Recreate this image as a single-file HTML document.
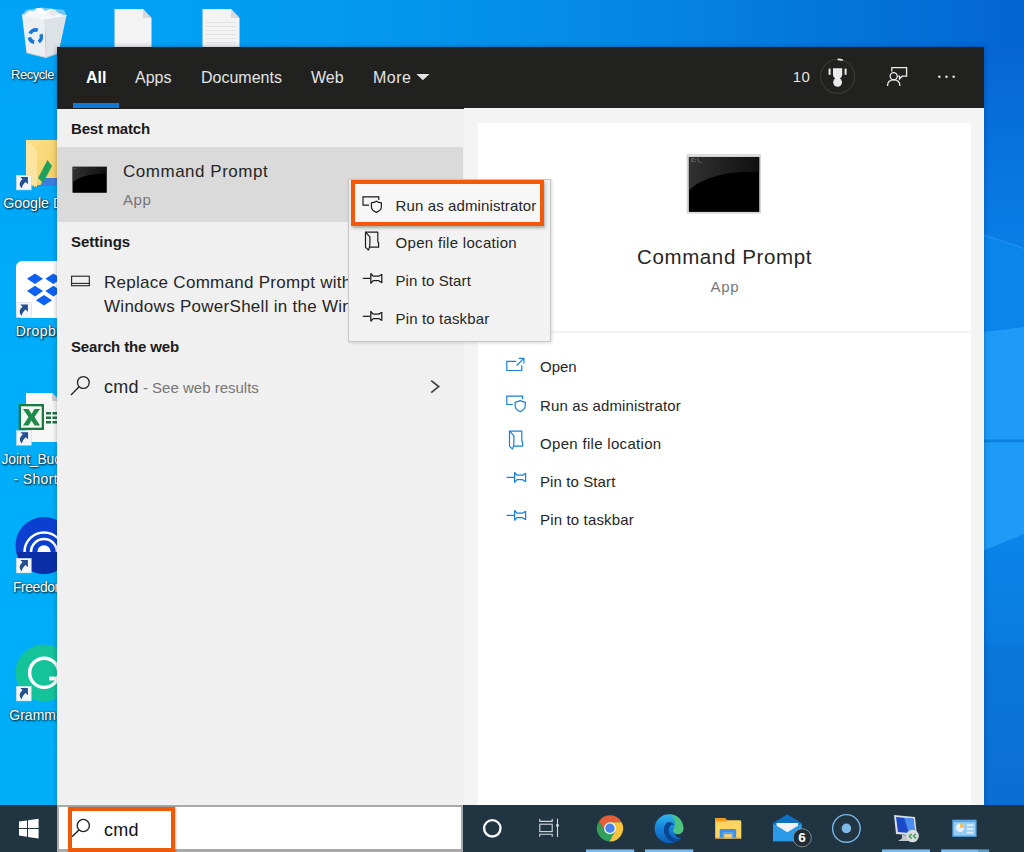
<!DOCTYPE html>
<html lang="en">
<head>
<meta charset="utf-8">
<title>Windows Search - cmd</title>
<style>
*{box-sizing:border-box;margin:0;padding:0}
html,body{width:1024px;height:852px;overflow:hidden;background:#00a2f3}
body{position:relative;font-family:"Liberation Sans",sans-serif;color:#262626}
.abs{position:absolute}
.t{position:absolute;white-space:nowrap;line-height:1}
.b{font-weight:bold;color:#1a1a1a}
.g{color:#767676}
.dl{color:#fff;font-size:14px;text-shadow:1px 1px 2px rgba(0,0,0,.85),0 0 2px rgba(0,0,0,.6)}
#desk{position:absolute;left:0;top:0;width:1024px;height:852px;overflow:hidden;
  background:linear-gradient(90deg,#00a2f5 0px,#00a1f4 150px,#0399ee 350px,#0489e6 600px,#0474da 850px,#0365d2 1024px)}
#panel{position:absolute;left:57px;top:47.300px;width:927.400px;height:758px;box-shadow:0 0 5px rgba(0,20,60,.35);background:#f0f0f0;overflow:hidden}
#rp{position:absolute;left:407px;top:61px;width:520px;height:697px;background:#f4f4f4}
#hdr{position:absolute;left:0;top:0;width:928px;height:61.400px;background:#212120}
#hdr .t{color:#e4e4e4;font-size:16px}
#card{position:absolute;left:420.500px;top:76px;width:493.500px;height:690px;background:#fff}
#sel{position:absolute;left:0;top:100px;width:406px;height:75px;background:#dadada}
#ctx{position:absolute;left:348px;top:179.300px;width:202.900px;height:162.500px;background:#f2f2f2;border:1px solid #c6c6c6;box-shadow:1px 1px 3px rgba(0,0,0,.15)}
#ctxhl{position:absolute;left:351.200px;top:180px;width:193.300px;height:46px;border:4.500px solid #f25a0a;background:#f7f7f7;box-shadow:1px 2px 3px rgba(0,0,0,.3)}
#tb{position:absolute;left:0;top:804.500px;width:1024px;height:48px;background:#203441}
#sbox{position:absolute;left:57px;top:805px;width:406px;height:47px;background:#fff;border:2px solid #a9a9a9;border-bottom-width:3px}
#shl{position:absolute;left:68px;top:807px;width:107px;height:45px;border:4px solid #ee5a0c;box-shadow:1px 0 2px rgba(0,0,0,.25)}
</style>
</head>
<body>
<div id="desk"></div>
<div class="abs" style="left:0;top:0;width:62px;height:806px;background:linear-gradient(180deg,#00a2f5 0px,#00a6f7 110px,#00adf8 360px,#00aef8 806px)"></div>
<svg class="abs" style="left:980px;top:47px" width="44" height="805" viewBox="980 47 44 805">
  <defs>
    <linearGradient id="w1" x1="0" y1="47" x2="0" y2="250" gradientUnits="userSpaceOnUse"><stop offset="0" stop-color="#0566d3"/><stop offset="1" stop-color="#0a7ee8"/></linearGradient>
    <linearGradient id="w5" x1="0" y1="535" x2="0" y2="852" gradientUnits="userSpaceOnUse"><stop offset="0" stop-color="#0a85ea"/><stop offset=".33" stop-color="#0a7ce0"/><stop offset=".36" stop-color="#0a76da"/><stop offset="1" stop-color="#0a6cd0"/></linearGradient>
  </defs>
  <rect x="980" y="47" width="44" height="300" fill="url(#w1)"/>
  <path d="M980 233.500 L1024 248.500 L1024 340 L980 340Z" fill="#0a85ec"/>
  <path d="M980 233.500 L1024 248.500" stroke="#2a98f2" stroke-width="1.200" fill="none" opacity=".7"/>
  <path d="M980 332.500 L1024 327 L1024 560 L980 560Z" fill="#1e9bf6"/>
  <rect x="980" y="439.500" width="44" height="2.800" fill="#0a80e0"/>
  <path d="M980 552 L1024 534 L1024 852 L980 852Z" fill="url(#w5)"/>
</svg>

<svg id="deskicons" class="abs" style="left:0;top:0" width="1024" height="852" viewBox="0 0 1024 852">
  <defs>
    <g id="sc">
      <rect x="0.250" y="0.250" width="15" height="14.700" fill="#f3f6f9" stroke="#c5d2de" stroke-width=".5"/>
      <path d="M4.300 2 L11.900 2 L11.900 9.200 L9.600 6.900 C7.600 8.300 6.300 10.500 5.700 13.200 C2.900 10.600 3 6.800 6.600 4.200Z" fill="#24508f"/>
    </g>
    <linearGradient id="gbin" x1="0" y1="0" x2="1" y2="0"><stop offset="0" stop-color="#c9d8e4"/><stop offset=".5" stop-color="#eef3f7"/><stop offset="1" stop-color="#b9cbd9"/></linearGradient>
    <linearGradient id="gfold" x1="0" y1="0" x2="1" y2="1"><stop offset="0" stop-color="#fde08e"/><stop offset="1" stop-color="#f4cd5e"/></linearGradient>
  </defs>
  <!-- recycle bin -->
  <path d="M22 14.800 L44.800 19 L66.500 15.500 L64 10 L42 7.500 L26 10Z" fill="#cfe4f3" opacity=".55"/>
  <path d="M25 14 L29 10.500 L34 11 L37 8 L42 8.500 L45 11 L50 9 L55 10 L58 13 L63 14.500 L64 17 L45 20 L24 16Z" fill="#f4f6f7"/>
  <path d="M37 8 L42 8.500 L45 11 L44 15 L38 13Z" fill="#ffffff"/>
  <path d="M50 9 L55 10 L58 13 L54 16 L49 14Z" fill="#e4e8eb"/>
  <path d="M22 14.800 L44.800 19 L46 57.500 L26.500 52.800Z" fill="#eceff1"/>
  <path d="M44.800 19 L66.500 15.500 L58.500 53 L46 57.500Z" fill="#dde2e6"/>
  <path d="M22 14.800 L44.800 19 L66.500 15.500" fill="none" stroke="#f8fafb" stroke-width="1" opacity=".9"/>
  <path d="M26.500 52.800 L46 57.500 L58.500 53" fill="none" stroke="#c9d0d6" stroke-width="1"/>
  <g fill="none" stroke="#1a78d6" stroke-width="3.600">
    <path d="M30 33.600 A5.900 5.900 0 0 1 37.800 30.400"/>
    <path d="M40.800 34.200 A5.900 5.900 0 0 1 38.600 41.800"/>
    <path d="M34.200 42.200 A5.900 5.900 0 0 1 29.400 37.400"/>
  </g>
  <!-- file icons -->
  <path d="M114.500 9 L143 9 L151.500 18 L151.500 48 L114.500 48Z" fill="#f3f3f3"/><path d="M143 9 L143 18 L151.500 18Z" fill="#d9d9d9"/>
  <path d="M202.500 9 L231 9 L239.500 18 L239.500 48 L202.500 48Z" fill="#f3f3f3"/><path d="M231 9 L231 18 L239.500 18Z" fill="#d9d9d9"/>
  <g stroke="#e2e2e2" stroke-width="1"><path d="M206 22.500h30M206 26.500h30M206 30.500h30M206 34.500h30M206 38.500h30M206 42.500h30"/></g>
  <!-- google drive folder -->
  <path d="M26 140 L58 140 L58 185 L35 185 L35 187 L26 182Z" fill="url(#gfold)"/>
  <path d="M26 140 L37 150 L37 187 L26 182Z" fill="#fde59f"/>
  <path d="M44 178 L58 178 L58 186 L40 186Z" fill="#3d7de0"/>
  <path d="M38 178 L47.500 160 L52 166 L43 183Z" fill="#1fa15d"/>
  <use href="#sc" x="16" y="175"/>
  <!-- dropbox -->
  <rect x="16" y="261" width="50" height="57" rx="6" fill="#ffffff"/>
  <g fill="#0d61f2"><path d="M35 273.500l8 5.300l-8 5.300l-8-5.300z"/><path d="M53.400 273.500l8 5.300l-8 5.300l-8-5.300z"/><path d="M35 285.800l8 5.300l-8 5.300l-8-5.300z"/><path d="M53.400 285.800l8 5.300l-8 5.300l-8-5.300z"/><path d="M44 295l8 5.300l-8 5.300l-8-5.300z"/></g>
  <use href="#sc" x="16" y="302.500"/>
  <!-- excel -->
  <path d="M26 393 L52 393 L60 401 L60 442 L26 442Z" fill="#f7f7f7"/><path d="M52 393 L52 401 L60 401Z" fill="#d0d0d0"/>
  <g fill="#1d6f42"><rect x="46" y="412" width="5" height="2.500"/><rect x="52.500" y="412" width="5" height="2.500"/><rect x="46" y="416.500" width="5" height="2.500"/><rect x="52.500" y="416.500" width="5" height="2.500"/><rect x="46" y="421" width="5" height="2.500"/><rect x="52.500" y="421" width="5" height="2.500"/></g>
  <rect x="18.700" y="404" width="25.300" height="26" fill="#1b7a43"/>
  <rect x="21" y="406.300" width="20.700" height="21.400" fill="#f2f7f3"/>
  <path d="M23 409 L28.500 409 L31.500 414 L34.500 409 L40 409 L34.500 417 L40 425.500 L34.500 425.500 L31.500 420.500 L28.500 425.500 L23 425.500 L28.500 417Z" fill="#1f8a4a"/>
  <use href="#sc" x="16.200" y="430.300"/>
  <!-- freedom -->
  <circle cx="44" cy="545.500" r="28.500" fill="#0b3fd0"/>
  <path d="M16.250 552 A28.500 28.500 0 0 0 71.750 552Z" fill="#0a2fa6"/>
  <g fill="none" stroke="#fff"><path d="M24.500 552 A19.500 19.500 0 0 1 63.500 552" stroke-width="2.400"/><path d="M31 552 A13 13 0 0 1 57 552" stroke-width="2.600"/></g>
  <path d="M37.300 552 A6.700 6.700 0 0 1 50.700 552Z" fill="#fff"/>
  <use href="#sc" x="16" y="558"/>
  <!-- grammarly -->
  <circle cx="44" cy="673" r="28.500" fill="#15c39a"/>
  <circle cx="44.200" cy="672.800" r="14.600" fill="none" stroke="#fff" stroke-width="3.400"/>
  <rect x="49" y="676.600" width="12" height="3.800" fill="#fff"/>
  <rect x="57" y="664" width="6" height="12.600" fill="#15c39a"/>
  <use href="#sc" x="16" y="686"/>
</svg>
<div class="t dl" id="l_rec" style="left:11px;top:68px;font-size:13px;letter-spacing:-.45px">Recycle Bin</div>
<div class="t dl" id="l_goo" style="left:3.200px;top:196px;font-size:14.3px;letter-spacing:-.05px">Google Drive</div>
<div class="t dl" id="l_dro" style="left:15.800px;top:324px;letter-spacing:.45px">Dropbox</div>
<div class="t dl" id="l_joi" style="left:1.600px;top:452px;letter-spacing:-.24px">Joint_Budget</div>
<div class="t dl" id="l_sho" style="left:13.500px;top:472px;letter-spacing:.35px">- Shortcut</div>
<div class="t dl" id="l_fre" style="left:13px;top:580px;letter-spacing:-.46px">Freedom</div>
<div class="t dl" id="l_gra" style="left:9.300px;top:708px">Grammarly</div>


<div id="panel">
  <div id="hdr">
    <div class="t" style="left:29px;top:23px;color:#fff;font-weight:bold">All</div>
    <div class="t" style="left:78px;top:23px">Apps</div>
    <div class="t" style="left:144px;top:23px">Documents</div>
    <div class="t" style="left:254px;top:23px">Web</div>
    <div class="t" style="left:316px;top:23px;letter-spacing:.5px">More</div>
    <div class="abs" style="left:15.500px;top:55.800px;width:46.500px;height:5.200px;background:#0f7ad8"></div>
    <div class="t" style="left:735.800px;top:21.700px;font-size:15px;letter-spacing:.3px">10</div>
  </div>
  <div id="rp"></div>
  <div id="sel"></div>
  <div id="card"></div>
</div>


<!-- left pane text -->
<div id="txt">
  <div class="t b" id="t_best" style="left:71px;top:121px;font-size:15px;letter-spacing:-.2px">Best match</div>
  <div class="t" id="t_cp" style="left:123px;top:163px;font-size:17px;letter-spacing:.52px">Command Prompt</div>
  <div class="t g" id="t_app" style="left:123px;top:192px;font-size:15px;letter-spacing:.6px">App</div>
  <div class="t b" id="t_set" style="left:71px;top:234px;font-size:15px">Settings</div>
  <div class="t" id="t_rep1" style="left:104px;top:274px;font-size:17px;letter-spacing:.28px">Replace Command Prompt with</div>
  <div class="t" id="t_rep2" style="left:104px;top:298px;font-size:17px;letter-spacing:.28px">Windows PowerShell in the Win</div>
  <div class="t b" id="t_web" style="left:71px;top:338.500px;font-size:15px;letter-spacing:-.15px">Search the web</div>
  <div class="t" id="t_cmd" style="left:104px;top:377.500px;font-size:18px;letter-spacing:.25px">cmd<span class="g" id="t_see" style="font-size:15px;letter-spacing:0"> - See web results</span></div>
  <!-- right pane -->
  <div class="t" id="t_cp2" style="left:637px;top:247px;font-size:20.5px;letter-spacing:.62px">Command Prompt</div>
  <div class="t g" id="t_app2" style="left:710.500px;top:279px;font-size:15px;letter-spacing:.7px">App</div>
  <div class="t" id="t_a1" style="left:540px;top:359px;font-size:15px">Open</div>
  <div class="t" id="t_a2" style="letter-spacing:0.12px;left:540px;top:397.500px;font-size:15px">Run as administrator</div>
  <div class="t" id="t_a3" style="letter-spacing:0.31px;left:540px;top:435.500px;font-size:15px">Open file location</div>
  <div class="t" id="t_a4" style="letter-spacing:0.1px;left:540px;top:473.500px;font-size:15px">Pin to Start</div>
  <div class="t" id="t_a5" style="letter-spacing:0.15px;left:540px;top:511.500px;font-size:15px">Pin to taskbar</div>
</div>

<svg id="picons" class="abs" style="left:0;top:0" width="1024" height="852" viewBox="0 0 1024 852">
  <defs>
    <linearGradient id="gcmd" x1="0" y1="0" x2="1" y2="0"><stop offset="0" stop-color="#5a5a5a"/><stop offset="1" stop-color="#1c1c1c"/></linearGradient>
    <g id="cmdico">
      <rect x="0" y="0" width="74" height="59" fill="#e9e9e9"/>
      <rect x="0.500" y="0.500" width="73" height="58" fill="none" stroke="#cfcfcf" stroke-width="1"/>
      <rect x="2" y="2.500" width="70.500" height="55" fill="#000"/>
      <path d="M2 2.500 L72.500 2.500 L72.500 17.500 C40 16 14 24 2 36Z" fill="url(#gcmd)" opacity=".55"/>
      <text x="4.500" y="8" font-family="Liberation Mono, monospace" font-size="4.500" fill="#bbb">C:\_</text>
    </g>
    <g id="i_admin" fill="none" stroke-width="1.200">
      <path d="M6.700 9 L0.600 9 L0.600 0.600 L16.400 0.600 L16.400 3.700"/>
      <path d="M14 5 C12.400 6.200 10.800 6.600 9 6.600 L9 10.600 C9 13.200 11.400 15.200 14 16.200 C16.600 15.200 19 13.200 19 10.600 L19 6.600 C17.200 6.600 15.600 6.200 14 5Z"/>
    </g>
    <g id="i_loc" fill="none" stroke-width="1.200" stroke-linejoin="round">
      <path d="M0.500 0.200 L12.800 0.200 L12.800 10 L13.600 10.600 L13.600 15.200 L4.600 15.200"/>
      <path d="M0.500 0.200 L4.900 4.900 L4.900 11.600 Q4.900 15 3.500 18 L0.500 15.400 Z"/>
    </g>
    <g id="i_pin" fill="none" stroke-width="1.250" stroke-linejoin="round">
      <path d="M0 5.200 L7.600 5.200"/>
      <path d="M8 0 L8 10.500 M8 0.300 L10.400 3 L16 3 L19 1.100 M19 0.900 L19 9.700 M19 9.500 L16 7.500 L10.400 7.500 L8 10.200"/>
    </g>
    <g id="i_open" fill="none" stroke-width="1.200">
      <path d="M10 3.600 L0.600 3.600 L0.600 12.800 L15.600 12.800 L15.600 7.500"/>
      <path d="M10.500 7.800 L17.600 0.700 M12.500 0.600 L17.700 0.600 L17.700 5.800"/>
    </g>
  </defs>
  <!-- small cmd icon in result row -->
  <g transform="translate(71.500,165.500) scale(0.4865,0.4746)"><use href="#cmdico"/></g>
  <!-- big cmd icon -->
  <use href="#cmdico" x="686.800" y="154.400"/>
  <!-- keyboard icon -->
  <g fill="none" stroke="#222" stroke-width="1.100"><rect x="71.600" y="276.200" width="17.700" height="9.500"/><path d="M71.600 283.400 L89.300 283.400"/></g>
  <!-- search icon (results) -->
  <g fill="none" stroke="#222" stroke-width="1.300"><circle cx="83.350" cy="382.500" r="5.900"/><path d="M79.100 386.700 L71 395"/></g>
  <path d="M431.200 380.600 L438.600 386.600 L431.200 392.600" fill="none" stroke="#444" stroke-width="1.800"/>
  <rect x="478" y="331" width="493" height="2.200" fill="#f3f3f3"/>
  <!-- right pane actions -->
  <g stroke="#1a7fd4">
    <use href="#i_open" x="506.200" y="357.700"/>
    <use href="#i_admin" x="506.200" y="395.500"/>
    <use href="#i_loc" x="509" y="431"/>
    <use href="#i_pin" x="506.600" y="472.200"/>
    <use href="#i_pin" x="506.600" y="510.200"/>
  </g>
</svg>


<svg id="hicons" class="abs" style="left:0;top:0" width="1024" height="852" viewBox="0 0 1024 852">
  <path d="M416.300 74 L429.500 74 L422.900 80.300Z" fill="#e4e4e4"/>
  <circle cx="837.600" cy="76.400" r="17" fill="none" stroke="#363636" stroke-width="1.300"/>
  <path d="M837.600 59.400 A17 17 0 0 1 842.800 60.200" fill="none" stroke="#e8e8e8" stroke-width="1.600"/>
  <g fill="#ebebeb">
    <path d="M833 68.200 L842.200 68.200 L842.200 74.500 C842.200 76.500 840.500 78 839.600 79.200 L835.600 79.200 C834.700 78 833 76.500 833 74.500Z"/>
    <rect x="828.600" y="68.600" width="2" height="6.200"/><rect x="844.600" y="68.600" width="2" height="6.200"/>
    <circle cx="837.600" cy="82.300" r="4.400"/>
  </g>
  <g fill="none" stroke="#ebebeb" stroke-width="1.300">
    <circle cx="893.700" cy="76.200" r="3.500"/>
    <path d="M887.500 86 C887.500 81.800 890.300 79.800 893.700 79.800 C897.100 79.800 899.900 81.800 899.900 86"/>
    <path d="M891.800 71.500 L891.800 67.600 L906.600 67.600 L906.600 76.200 L902.200 76.200 L899.500 79 L899.500 76.200 L898.300 76.200"/>
  </g>
  <g fill="#e4e4e4"><circle cx="939.300" cy="76.800" r="1.250"/><circle cx="946.500" cy="76.800" r="1.250"/><circle cx="953.700" cy="76.800" r="1.250"/></g>
</svg>
<div id="ctx"></div>
<div id="ctxhl"></div>

<svg id="cicons" class="abs" style="left:0;top:0" width="1024" height="852" viewBox="0 0 1024 852">
  <g stroke="#1d1d1d">
    <use href="#i_admin" x="362.400" y="196.200"/>
    <use href="#i_loc" x="365" y="232"/>
    <use href="#i_pin" x="362.800" y="273.200"/>
    <use href="#i_pin" x="362.800" y="311.100"/>
  </g>
</svg>
<div id="ctxt">
  <div class="t" id="t_c1" style="letter-spacing:0.12px;left:395.500px;top:197.500px;font-size:15px">Run as administrator</div>
  <div class="t" id="t_c2" style="letter-spacing:0.31px;left:395.500px;top:235px;font-size:15px">Open file location</div>
  <div class="t" id="t_c3" style="letter-spacing:0.1px;left:395.500px;top:273px;font-size:15px">Pin to Start</div>
  <div class="t" id="t_c4" style="letter-spacing:0.15px;left:395.500px;top:311px;font-size:15px">Pin to taskbar</div>
</div>


<div id="tb"></div>
<div id="sbox"></div>
<div id="shl"></div>
<div class="t" id="t_scmd" style="left:104px;top:820.500px;font-size:18px;letter-spacing:.25px;color:#111">cmd</div>


<svg id="tbicons" class="abs" style="left:0;top:0" width="1024" height="852" viewBox="0 0 1024 852">
  <!-- windows logo -->
  <g fill="#fff"><path d="M19 821.600 L27 820.500 L27 828.100 L19 828.100Z"/><path d="M28 820.300 L38.600 818.800 L38.600 828.100 L28 828.100Z"/><path d="M19 829.100 L27 829.100 L27 836.700 L19 835.600Z"/><path d="M28 829.100 L38.600 829.100 L38.600 838.400 L28 836.900Z"/></g>
  <!-- search icon -->
  <g fill="none" stroke="#222" stroke-width="1.400"><circle cx="83.300" cy="825.500" r="6.100"/><path d="M78.900 829.900 L72 836.800"/></g>
  <!-- cortana -->
  <circle cx="492.300" cy="828.300" r="8.200" fill="none" stroke="#f4f6f7" stroke-width="2.400"/>
  <!-- task view -->
  <g fill="none" stroke="#d3dade" stroke-width="1.100"><rect x="539.800" y="824.200" width="12.400" height="7.400"/><path d="M539.800 818.800 L539.800 821.400 L552.200 821.400 L552.200 818.800 M539.800 836.800 L539.800 834.200 L552.200 834.200 L552.200 836.800 M557.500 818.700 L557.500 836.900"/></g>
  <circle cx="557.500" cy="825.400" r="1.300" fill="#e8ecee"/>
  <!-- chrome -->
  <g>
    <path d="M604.800 831.300 L598.980 821.210 A13.100 13.100 0 0 1 621.650 822.300 L610 822.300Z" fill="#e65f3a"/>
    <path d="M604.800 831.300 L598.980 821.210 A13.100 13.100 0 0 0 609.370 841.390 L615.200 831.300Z" fill="#31a05a"/>
    <path d="M610 822.300 L621.650 822.300 A13.100 13.100 0 0 1 609.370 841.390 L615.200 831.300Z" fill="#f8c341"/>
    <circle cx="610" cy="828.300" r="6" fill="#f1f4f8"/>
    <circle cx="610" cy="828.300" r="4.700" fill="#4a86ea"/>
  </g>
  <!-- edge -->
  <g>
    <linearGradient id="gedge" x1="0" y1="0" x2="0" y2="1"><stop offset="0" stop-color="#33b4ea"/><stop offset=".45" stop-color="#1688dc"/><stop offset="1" stop-color="#0c5cb6"/></linearGradient>
    <linearGradient id="gedge2" x1="0" y1="0" x2="1" y2="0"><stop offset="0" stop-color="#35b9c9"/><stop offset=".5" stop-color="#4cc47c"/><stop offset="1" stop-color="#55c77a"/></linearGradient>
    <path d="M669 814.200 A14.400 14.400 0 0 1 683.400 828.600 C683.400 833 679.500 835 676 833.800 C675 836 677 838.500 681.500 837.500 C679 841.500 674 843.200 669 843 A14.400 14.400 0 0 1 669 814.200Z" fill="url(#gedge)"/>
    <path d="M670 814.300 C677.500 814.600 683.400 820.800 683.400 828.600 C683.400 833 679.500 835 676 833.800 C673 832.800 672.300 830.600 673.600 828.600 C676.500 824 674.500 817.500 670 814.300Z" fill="url(#gedge2)"/>
    <path d="M666.500 823 C661.500 828 663.500 837.500 671.500 841.500 C676 843 680 841 682 837.800 C679 839.500 675.500 839.300 672.600 837.200 C668.200 834 667.800 829.200 670 826.200 C671.500 824.300 673.200 824.300 674.200 825.300 C672.500 821.800 668.500 821 666.500 823Z" fill="#0b4690"/>
  </g>
  <!-- explorer -->
  <g>
    <path d="M715.200 818 L725 818 L727 820.200 L739.800 820.200 Q741.300 820.200 741.300 821.700 L741.300 838.500 L715.200 838.500Z" fill="#fcd462"/>
    <path d="M715.200 818 L725 818 L727 820.200 L727 821.400 L715.200 821.400Z" fill="#f39c1f"/>
    <path d="M719.700 838.500 L719.700 830.500 Q719.700 829 721.200 829 L734.700 829 Q736.200 829 736.200 830.500 L736.200 838.500Z" fill="#3d8fe2"/>
    <rect x="722.500" y="832" width="11" height="6.500" fill="#5aa5ec"/>
    <rect x="724.300" y="834.200" width="7.400" height="4.300" fill="#fcd462"/>
    <rect x="715.200" y="837.500" width="26.100" height="1" fill="#e9a52c"/>
  </g>
  <!-- mail -->
  <g>
    <path d="M773 823 L787.300 814.300 L801.600 823 L801.600 841.300 L773 841.300Z" fill="#106ebe"/>
    <path d="M776.500 823 L798.200 823 L798.200 830 L787.300 836.500 L776.500 830Z" fill="#f1f3f4"/>
    <path d="M773 823.500 L787.300 832.300 L801.600 823.500 L801.600 841.300 L773 841.300Z" fill="#2b9ae8"/>
    <circle cx="802.200" cy="837.800" r="9.100" fill="#222c35" stroke="#8b949b" stroke-width=".9"/>
  </g>
  <!-- target/cortana-like -->
  <circle cx="846.400" cy="828.400" r="13.800" fill="none" stroke="#76b7e6" stroke-width="1.400"/>
  <circle cx="846.400" cy="828.400" r="4.800" fill="#7cbbe8"/>
  <!-- rdp -->
  <g>
    <path d="M894 815 L915 817 L917 836 L896 834Z" fill="#d7dde3"/>
    <path d="M896 817 L913.500 818.700 L915 833.500 L898 832Z" fill="#1c49c8"/>
    <path d="M904 817.800 L913.500 818.700 L915 833.500 L909 833Z" fill="#4c8df0"/>
    <path d="M902 835 L910 835.800 L911 839 L915 841 L898 841 L902 838.500Z" fill="#c3c9cf"/>
    <circle cx="912.500" cy="836" r="6.300" fill="#d9dcdf"/>
    <path d="M909 836.500 l2.800 -2.500 M909 836.500 l2.800 2 M916 834 l-2.500 2 l2.500 2.500" stroke="#2e9a47" stroke-width="1.300" fill="none"/>
  </g>
  <!-- control panel-ish -->
  <g>
    <rect x="952.300" y="819.700" width="24.300" height="17.100" fill="#5aa6e6"/>
    <rect x="953.600" y="822.200" width="21.700" height="13.400" fill="#96cdf3"/>
    <circle cx="960" cy="827.800" r="4.200" fill="#e3f1fb"/><path d="M960 827.800 L960 823.600 A4.200 4.200 0 0 1 964.200 827.800Z" fill="#f2c14b"/>
    <rect x="966.800" y="824.300" width="6.500" height="1.800" fill="#dff0fb"/><rect x="966.800" y="828" width="6.500" height="1.800" fill="#dff0fb"/><rect x="966.800" y="831.700" width="6.500" height="1.800" fill="#dff0fb"/>
  </g>
  <!-- running indicators -->
  <g fill="#76b9ed">
    <rect x="586" y="849.400" width="48.200" height="2.600"/><rect x="645" y="849.400" width="48.300" height="2.600"/>
    <rect x="882" y="849.400" width="48" height="2.600"/><rect x="941.200" y="849.400" width="37.500" height="2.600"/>
  </g>
  <rect x="978.700" y="849.400" width="10.500" height="2.600" fill="#5a9cc4"/>
</svg>
<div class="t" style="left:798.300px;top:831px;font-size:13.500px;font-weight:bold;color:#fff">6</div>
</body>
</html>
